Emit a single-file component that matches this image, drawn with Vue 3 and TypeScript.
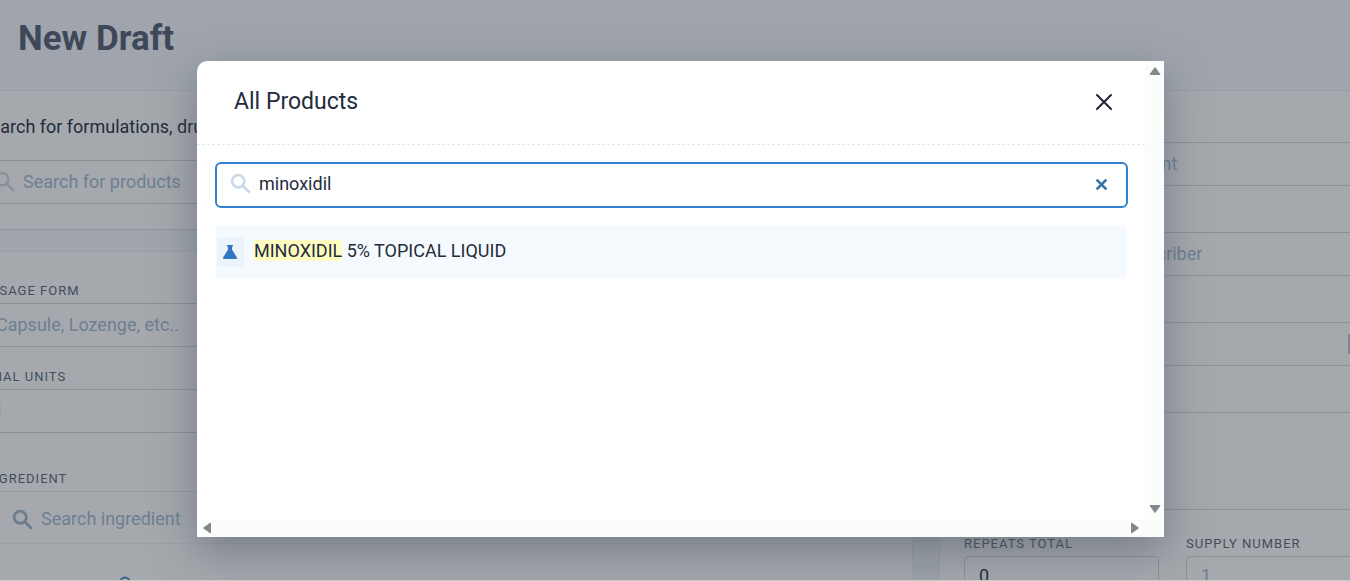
<script setup lang="ts">
import { computed, ref } from 'vue'

interface Product {
  id: number
  name: string
}

const query = ref<string>('minoxidil')
const products: Product[] = [{ id: 1, name: 'MINOXIDIL 5% TOPICAL LIQUID' }]

const results = computed(() => {
  const q = query.value.trim().toLowerCase()
  return products
    .filter((p) => p.name.toLowerCase().includes(q))
    .map((p) => {
      const at = p.name.toLowerCase().indexOf(q)
      return {
        id: p.id,
        before: p.name.slice(0, at),
        match: p.name.slice(at, at + q.length),
        after: p.name.slice(at + q.length),
      }
    })
})
</script>

<template>
  <div class="page">
    <header class="page-head">
      <h1>New Draft</h1>
    </header>

    <div class="columns">
      <main class="left">
        <section class="card card-search">
          <label class="lead" for="formulation">Search for formulations, drugs</label>
          <div class="field">
            <svg class="glass faint" viewBox="0 0 24 24" aria-hidden="true">
              <circle cx="9" cy="9" r="6.7" />
              <path d="M14 14l7.6 7.6" />
            </svg>
            <input id="formulation" type="text" placeholder="Search for products" />
          </div>
        </section>

        <section class="card card-form">
          <label class="caption" for="dosage">DOSAGE FORM</label>
          <div class="field"><input id="dosage" type="text" placeholder="Capsule, Lozenge, etc.." /></div>
          <label class="caption next" for="units">FINAL UNITS</label>
          <div class="field units"><input id="units" type="text" value="ml" /></div>
          <label class="caption ingredient" for="ingredient">INGREDIENT</label>
          <div class="ingredient-row">
            <svg class="glass" viewBox="0 0 24 24" aria-hidden="true">
              <circle cx="9" cy="9" r="6.7" />
              <path d="M14 14l7.6 7.6" />
            </svg>
            <input id="ingredient" type="text" placeholder="Search ingredient" />
          </div>
          <button class="add" type="button" aria-label="Add ingredient">
            <svg viewBox="0 0 12 12" aria-hidden="true"><circle cx="6" cy="6" r="4.6" /></svg>
          </button>
        </section>
      </main>

      <div class="track"><div class="thumb"></div></div>

      <aside class="right">
        <div class="field"><input type="text" aria-label="Patient" placeholder="Search for patient" /></div>
        <div class="field"><input type="text" aria-label="Prescriber" placeholder="Search for prescriber" /></div>
        <div class="field"><input type="text" aria-label="Date" /><span class="edge"></span></div>
        <textarea aria-label="Directions"></textarea>
        <div class="counts">
          <div>
            <label class="caption" for="repeats">REPEATS TOTAL</label>
            <input id="repeats" type="text" value="0" />
          </div>
          <div>
            <label class="caption" for="supply">SUPPLY NUMBER</label>
            <input id="supply" type="text" placeholder="1" />
          </div>
        </div>
      </aside>
    </div>

    <div class="overlay">
      <div class="modal" role="dialog" aria-modal="true" aria-labelledby="modal-title">
        <div class="modal-content">
          <div class="modal-head">
            <h2 id="modal-title">All Products</h2>
            <button class="close" type="button" aria-label="Close">
              <svg viewBox="0 0 18 18" aria-hidden="true"><path d="M2 2l14 14M16 2L2 16" /></svg>
            </button>
          </div>
          <div class="modal-body">
            <div class="search">
              <svg class="glass pale" viewBox="0 0 24 24" aria-hidden="true">
                <circle cx="9" cy="9" r="6.7" />
                <path d="M14 14l7.6 7.6" />
              </svg>
              <input v-model="query" type="text" aria-label="Search products" />
              <button class="clear" type="button" aria-label="Clear" @click="query = ''">
                <svg viewBox="0 0 12 12" aria-hidden="true"><path d="M1.5 1.5l9 9M10.5 1.5l-9 9" /></svg>
              </button>
            </div>
            <ul class="results">
              <li v-for="r in results" :key="r.id">
                <span class="tile">
                  <svg viewBox="0 0 14 14" aria-hidden="true">
                    <path d="M4 0h6v1.500H9.100v3.300L13.800 12.300c.4.900 0 1.700-1 1.700H1.200c-1 0-1.400-.8-1-1.700L4.900 4.800V1.500H4z" />
                  </svg>
                </span>
                <span class="name">{{ r.before }}<mark>{{ r.match }}</mark>{{ r.after }}</span>
              </li>
            </ul>
          </div>
        </div>
        <div class="bar bar-y">
          <svg viewBox="0 0 12 10" aria-hidden="true"><path d="M6 1.5L11 8.500H1z" /></svg>
          <svg viewBox="0 0 12 10" aria-hidden="true"><path d="M6 8.500L11 1.500H1z" /></svg>
        </div>
        <div class="bar bar-x">
          <svg viewBox="0 0 10 12" aria-hidden="true"><path d="M1.500 6L8.500 1v10z" /></svg>
          <svg viewBox="0 0 10 12" aria-hidden="true"><path d="M8.500 6L1.500 1v10z" /></svg>
        </div>
        <div class="corner"></div>
      </div>
    </div>
  </div>
</template>

<style>
body {
  margin: 0;
}
</style>

<style scoped>
.page,
.page * {
  box-sizing: border-box;
}
.page {
  position: relative;
  display: flex;
  flex-direction: column;
  height: 100vh;
  overflow: hidden;
  background: #a0a5ad;
  border-bottom: 1px solid #c9cbcd;
  font-family: Roboto, "Liberation Sans", sans-serif;
  font-size: 18px;
  color: #232c3b;
}
input,
textarea,
button {
  margin: 0;
  padding: 0;
  border: 0;
  outline: 0;
  background: none;
  font: inherit;
  color: inherit;
}
input {
  min-width: 0;
  flex: 1;
  padding-bottom: 2px;
}
input::placeholder {
  color: #6e7f91;
  opacity: 1;
}
svg {
  display: block;
}
.page-head {
  flex: none;
  height: 90px;
  padding: 18px;
}
h1 {
  margin: 0;
  font-size: 35px;
  line-height: 42px;
  font-weight: 700;
  color: #3f4858;
}
.columns {
  flex: 1;
  min-height: 0;
  display: grid;
  grid-template-columns: minmax(0, 932fr) 28px minmax(0, 410fr);
  margin-left: -20px;
}
.left {
  display: flex;
  flex-direction: column;
  gap: 21px;
}
.card {
  background: #a5a9ae;
  border-top: 1px solid #9a9fa5;
}
.card-search {
  padding: 25px 0 25px;
  border-bottom: 1px solid #8f959b;
}
.card-form {
  flex: 1;
  padding-top: 31px;
}
.lead {
  display: block;
  line-height: 22px;
  margin-bottom: 22px;
}
.field {
  display: flex;
  align-items: center;
  height: 44px;
  border: 1px solid #8b9197;
}
.field input {
  padding-left: 12px;
}
.card .field {
  padding-left: 3px;
}
.card-search .field {
  padding-left: 13px;
}
.card-search .field input {
  padding-left: 7px;
}
.card .units,
.units input {
  padding-left: 0;
}
.glass {
  flex: none;
  width: 22px;
  height: 22px;
  fill: none;
  stroke: #6b7c8e;
  stroke-width: 3;
}
.faint {
  stroke: #8a9198;
}
.pale {
  stroke: #cbd9e9;
}
.caption {
  display: block;
  margin-bottom: 4px;
  font-size: 13px;
  line-height: 16px;
  letter-spacing: 1px;
  color: #434d5b;
}
.next {
  margin-top: 22px;
}
.ingredient {
  margin-top: 38px;
  padding-left: 4px;
}
.ingredient-row {
  display: flex;
  align-items: center;
  gap: 7px;
  height: 53px;
  padding: 4px 32px 0;
  border-top: 1px solid #959a9f;
  border-bottom: 1px solid #9da2a8;
}
.add {
  display: block;
  margin: 32px 0 0 139px;
}
.add svg {
  width: 12px;
  height: 12px;
  fill: none;
  stroke: #3e6490;
  stroke-width: 2;
}
.track {
  display: flex;
  flex-direction: column;
  justify-content: flex-end;
  background: #a0a4aa;
  border: 1px solid #999ea6;
  border-width: 0 1px;
}
.thumb {
  height: 34px;
  background: #9da2aa;
}
.right {
  padding: 51px 0 0 24px;
  background: #a5a9ae;
  border-top: 1px solid #9a9fa5;
}
.right .field {
  margin: 0 -2px 46px 0;
}
.right .field input {
  padding-left: 70px;
}
.edge {
  width: 3px;
  height: 20px;
  background: #7e8791;
}
.right textarea {
  display: block;
  width: calc(100% + 2px);
  height: 98px;
  border: 1px solid #8b9197;
  resize: none;
}
.counts {
  display: grid;
  grid-template-columns: 195px minmax(0, 1fr);
  gap: 27px;
  margin: 26px -40px 0 0;
}
.counts input {
  width: 100%;
  height: 40px;
  padding-left: 14px;
  border: 1px solid #8b9197;
  border-radius: 4px;
}
.overlay {
  position: absolute;
  inset: 0;
  display: flex;
  padding: 61px 186px 43px 197px;
}
.modal {
  flex: 1;
  min-width: 0;
  display: grid;
  grid-template-columns: minmax(0, 1fr) 19px;
  grid-template-rows: minmax(0, 1fr) 18px;
  overflow: hidden;
  background: #fff;
  border-radius: 10px 0 0 0;
  box-shadow: 0 14px 44px rgba(70, 80, 92, 0.5);
}
.modal-head {
  display: flex;
  align-items: center;
  justify-content: space-between;
  height: 84px;
  padding: 0 32px 2px 37px;
  border-bottom: 1px dashed #dce9f5;
}
h2 {
  margin: 0;
  font-size: 23px;
  line-height: 28px;
  font-weight: 400;
}
.close svg {
  width: 18px;
  height: 18px;
  fill: none;
  stroke: #1c2534;
  stroke-width: 2;
  stroke-linecap: round;
}
.modal-body {
  padding: 17px 17px 0 18px;
}
.search {
  display: flex;
  align-items: center;
  gap: 7px;
  height: 46px;
  padding: 0 18px 2px 13px;
  border: 2px solid #3182ce;
  border-radius: 6px;
}
.clear svg {
  width: 13px;
  height: 13px;
  fill: none;
  stroke: #3b74aa;
  stroke-width: 2.6;
}
.results {
  margin: 17px 1px 0;
  padding: 0;
  list-style: none;
}
.results li {
  display: flex;
  align-items: center;
  gap: 10px;
  height: 54px;
  padding-left: 1px;
  background: #f5faff;
}
.name {
  padding-bottom: 3px;
}
.tile {
  display: grid;
  place-items: center;
  width: 27px;
  height: 30px;
  padding-right: 1px;
  border-radius: 3px;
  background: #edf3fb;
}
.tile svg {
  width: 14px;
  height: 14px;
  fill: #2f78c0;
}
mark {
  color: inherit;
  background: #fefcbf;
  border-radius: 3px;
}
.bar {
  display: flex;
  align-items: center;
  justify-content: space-between;
  background: #fbfcfc;
}
.bar svg {
  fill: #858789;
  stroke: #858789;
  stroke-linejoin: round;
}
.bar-y {
  flex-direction: column;
  padding: 5px 0;
}
.bar-y svg {
  width: 12px;
  height: 10px;
}
.bar-x {
  padding: 0 5px;
}
.bar-x svg {
  width: 10px;
  height: 12px;
}
.corner {
  background: #fbfcfc;
}
</style>
